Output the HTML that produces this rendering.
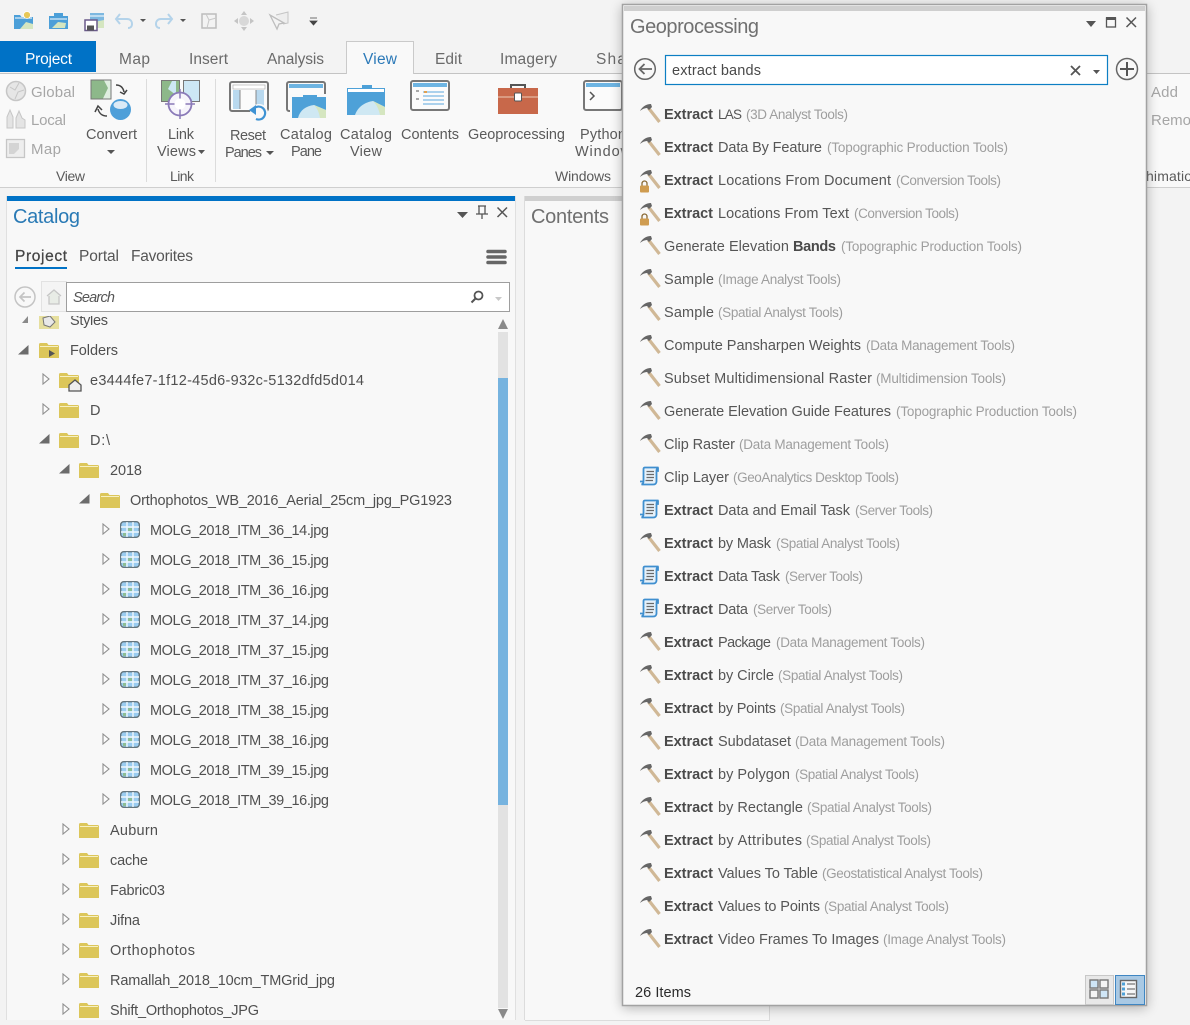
<!DOCTYPE html>
<html><head><meta charset="utf-8"><title>Geoprocessing</title>
<style>
html,body{margin:0;padding:0;background:#f3f3f3;width:1190px;height:1025px;overflow:hidden}
svg{display:block}
text{font-family:"Liberation Sans",sans-serif;font-size:15px;fill:#505050}
.r{fill:#5a5a5a;font-size:14.5px}
.g{fill:#a6a6a6;font-size:15px}
.t{fill:#505050;font-size:14.5px}
.b{font-weight:bold;fill:#4a4a4a;font-size:14.5px}
.m{fill:#565656;font-size:14.5px}
.c{fill:#9e9e9e;font-size:13.5px}
.tab{fill:#6a6a6a;font-size:15.5px}
.h{font-size:20px;fill:#707070}
</style></head><body>
<svg width="1190" height="1025" viewBox="0 0 1190 1025" xmlns="http://www.w3.org/2000/svg">
<defs>
<filter id="sh" x="-10%" y="-10%" width="120%" height="120%"><feGaussianBlur stdDeviation="6"/></filter>
<clipPath id="tree"><rect x="8" y="316" width="488" height="704"/></clipPath>
<clipPath id="rib"><rect x="0" y="0" width="622" height="190"/></clipPath>
<symbol id="ham" viewBox="0 0 22 20" width="22" height="20" overflow="visible">
<path d="M8.500 5 L19.500 19" stroke="#d0b896" stroke-width="3.200" fill="none"/>
<path d="M0 8 C2 4 6 1 11 1 L12 4 L9 7 L7 5 C5 5 2 6 0 8Z" fill="#666"/>
</symbol>
<symbol id="lock" viewBox="0 0 11 13" width="11" height="13">
<path d="M3 6V3.500a2.500 2.500 0 0 1 5 0V6" stroke="#8a6a35" stroke-width="1.300" fill="none"/>
<rect x="1" y="5.500" width="9" height="7" rx="1" fill="#cf9c50"/>
</symbol>
<symbol id="scr" viewBox="0 0 22 20" width="22" height="20">
<path d="M6 1.500H19.500C18 2 17.500 3 17.500 5V15.500C17.500 17.500 16 18.500 14 18.500H2.500C4 18 4.500 17 4.500 15V3C4.500 2 5 1.500 6 1.500Z" fill="#e6f1fa" stroke="#3f8fcf" stroke-width="1.800"/>
<path d="M7.500 5.500H15M7.500 8.500H15M7.500 11.500H15M6.500 14.500H14" stroke="#6a6a6a" stroke-width="1.300"/>
<path d="M1 15.500H4.500M19 1.500V5H17.500" stroke="#3f8fcf" stroke-width="1.800" fill="none"/>
</symbol>
<symbol id="fol" viewBox="0 0 20 16" width="20" height="16">
<path d="M0 2.500C0 1.500.5 1 1.500 1H8L9.500 3H18.500C19.500 3 20 3.500 20 4.500V16H0Z" fill="#dcc65a"/>
<path d="M1 4H19V5H1Z" fill="#f7f0c2"/>
</symbol>
<symbol id="ras" viewBox="0 0 20 17" width="20" height="17">
<rect x=".7" y=".7" width="18.600" height="15.600" rx="3" fill="#9accf0" stroke="#64757c" stroke-width="1.400"/>
<path d="M7 1V16M13 1V16M1 6H19M1 11H19" stroke="#eef7fc" stroke-width="1.400"/>
<rect x="8" y="7" width="4" height="3" fill="#8cbd94"/><rect x="3" y="12" width="3" height="3" fill="#8cbd94"/>
</symbol>
<symbol id="ao" viewBox="0 0 8 12" width="8" height="12"><path d="M1 1L7 6L1 11Z" fill="#fbfbfb" stroke="#8f8f8f" stroke-width="1.100"/></symbol>
<symbol id="af" viewBox="0 0 11 10" width="11" height="10"><path d="M10.500 0V9.500H0Z" fill="#6c6c6c"/></symbol>
</defs>

<!-- base -->
<rect width="1190" height="1025" fill="#f3f3f3"/>
<rect x="0" y="74" width="1190" height="113" fill="#f9f9f9"/>
<rect x="0" y="73" width="1190" height="1" fill="#c4c4c4"/>
<rect x="0" y="187" width="1190" height="1" fill="#cfcfcf"/>

<g clip-path="url(#rib)">
<!-- quick access -->
<path d="M14 15H20L21.500 17H33V29H14Z" fill="#4c9fd8"/><path d="M15 18H32" stroke="#fff"/><path d="M20 29L26 22L33 24V29Z" fill="#d5e6c0"/><circle cx="27" cy="15" r="3.500" fill="#e8c858" stroke="#fff" stroke-width=".7"/>
<path d="M49 16H54V13H63V16H68V29H49Z" fill="#4c9fd8"/><path d="M52 28L58 22L66 23L65 28Z" fill="#d5e6c0"/><path d="M50 19H67" stroke="#fff" stroke-width="1"/>
<path d="M90 13H104V28H90Z" fill="#7db8e0"/><path d="M90 16H104" stroke="#fff"/><path d="M94 22L104 20V28H94Z" fill="#d5e6c0"/><rect x="85" y="20" width="12" height="10.500" fill="#fff" stroke="#6a5a8a" stroke-width="1.500"/><rect x="87" y="25.500" width="7" height="5" fill="#555"/>
<path d="M120 14L116 19L120 24M117 19H127C131 19 132 22 132 24C132 27 130 28 128 28" fill="none" stroke="#b4d3ea" stroke-width="2"/>
<path d="M140 19H146L143 22Z" fill="#555"/>
<path d="M168 14L172 19L168 24M171 19H161C157 19 156 22 156 24C156 27 158 28 160 28" fill="none" stroke="#b4d3ea" stroke-width="2"/>
<path d="M180 19H186L183 22Z" fill="#555"/>
<rect x="202" y="14" width="14" height="14" fill="#f3f3f3" stroke="#bdbdbd" stroke-width="1.500"/><path d="M206 14L209 20L207 28M209 20L216 18" fill="none" stroke="#c8c8c8"/>
<circle cx="244" cy="21" r="5" fill="#d8d8d8"/><path d="M244 11L241 15H247ZM244 31L241 27H247ZM234 21L238 18V24ZM254 21L250 18V24Z" fill="#c4c4c4"/>
<path d="M276 15L288 12V23L283 24" fill="#eee" stroke="#c4c4c4"/><path d="M270 15L277 29L279 24L284 23Z" fill="#f3f3f3" stroke="#bdbdbd" stroke-width="1.300"/>
<path d="M310 18H317M310 21H317L313.500 25Z" fill="#444" stroke="#444" stroke-width=".8"/>

<!-- tabs -->
<rect x="0" y="41" width="96" height="31" fill="#0072c6"/>
<text x="25" y="64" style="fill:#fff;font-size:15.5px" textLength="47">Project</text>
<text class="tab" x="119" y="64" textLength="31">Map</text>
<text class="tab" x="189" y="64" textLength="39">Insert</text>
<text class="tab" x="267" y="64" textLength="57">Analysis</text>
<path d="M346.500 74V41.500H413.500V74" fill="#f9f9f9" stroke="#cacaca"/>
<text x="363" y="64" style="fill:#2b79b8;font-size:15.5px" textLength="34">View</text>
<text class="tab" x="435" y="64" textLength="27">Edit</text>
<text class="tab" x="500" y="64" textLength="57">Imagery</text>
<text class="tab" x="596" y="64" textLength="30">Sha</text>

<!-- ribbon left -->
<circle cx="16" cy="91" r="9.500" fill="#e6e6e6" stroke="#c6c6c6" stroke-width="1.500"/><path d="M10 87L15 90L19 83M15 99L18 92L24 90" stroke="#c6c6c6" fill="none"/>
<text class="g" x="31" y="97" textLength="44">Global</text>
<path d="M7 128V117L10 110L13 117V128ZM16 128V118L19 111L22 118L25 120V128Z" fill="#e4e4e4" stroke="#c6c6c6"/>
<text class="g" x="31" y="125" textLength="35">Local</text>
<rect x="6.500" y="139.500" width="18" height="18" fill="#eee" stroke="#c6c6c6" stroke-width="1.300"/><path d="M9 143H19V149L14 154H9Z" fill="#d4d4d4"/>
<text class="g" x="31" y="154" textLength="30">Map</text>

<rect x="91" y="80" width="20" height="19" fill="#8db88a" stroke="#777"/><path d="M104 80.500L108 88L103 98.500H110.500V80.500Z" fill="#dfeee0"/>
<path d="M116 85C120 85 123 87 124 92M120 92L124 94L127 90" fill="none" stroke="#444" stroke-width="1.500"/>
<path d="M107 116C102 116 99 113 98 109M95 112L98 106L102 110" fill="none" stroke="#444" stroke-width="1.500"/>
<ellipse cx="120.500" cy="109.500" rx="10.500" ry="10.500" fill="#4e9fd9"/><ellipse cx="120.500" cy="105" rx="7" ry="4" fill="#dbeaf6"/>
<text class="r" x="86" y="139" textLength="51">Convert</text>
<path d="M107 150H115L111 154Z" fill="#555"/>
<text class="r" x="56" y="181" style="font-size:14px" textLength="29">View</text>
<rect x="146" y="79" width="1" height="103" fill="#dcdcdc"/>

<rect x="161.500" y="80.500" width="18" height="21" fill="#8db88a" stroke="#777"/><rect x="183.500" y="80.500" width="16" height="21" fill="#cde7f5" stroke="#777"/><path d="M172 81L168 89L176 95V81Z" fill="#cde7f5"/>
<circle cx="180" cy="104" r="11.500" fill="#f6f4fb" stroke="#8a7ab8" stroke-width="1.800"/><path d="M180 89V119M165 104H195" stroke="#8a7ab8" stroke-width="1.500"/><circle cx="180" cy="104" r="5.500" fill="#fff"/>
<text class="r" x="168" y="139" textLength="26">Link</text>
<text class="r" x="157" y="156" textLength="39">Views</text>
<path d="M198 150H205L201.500 154Z" fill="#555"/>
<text class="r" x="170" y="181" style="font-size:14px" textLength="24">Link</text>
<rect x="215" y="79" width="1" height="103" fill="#dcdcdc"/>

<rect x="230" y="82" width="38" height="29" rx="2" fill="#fbfbfb" stroke="#777" stroke-width="2"/><rect x="233" y="85" width="32" height="4" fill="#fff" stroke="#aaa" stroke-width=".6"/><rect x="233" y="90" width="7" height="19" fill="#b9d9ef"/><rect x="256" y="90" width="8" height="19" fill="#b9d9ef"/><path d="M240 90V109M256 90V109" stroke="#888"/>
<circle cx="259" cy="113" r="9" fill="#f9f9f9"/><path d="M254 108.500A6.500 6.500 0 1 1 256 119" fill="none" stroke="#3f93d4" stroke-width="2.200"/><path d="M249 110L256 105V115Z" fill="#3f93d4"/>
<text class="r" x="230" y="140" textLength="36">Reset</text>
<text class="r" x="225" y="157" textLength="37">Panes</text>
<path d="M266 151H274L270 155Z" fill="#555"/>

<rect x="287" y="82" width="38" height="29" rx="2" fill="#fafafa" stroke="#777" stroke-width="2"/><rect x="289" y="84" width="34" height="4" fill="#6db4e2"/>
<rect x="290" y="94" width="38" height="26" fill="#f9f9f9"/>
<path d="M292 97H303V95H317V97H326V118H292Z" fill="#4ea1d8"/><path d="M298 118C300 110 306 106 314 105L326 110V118Z" fill="#cfe8f3"/><path d="M314 105L326 110V118H320C319 112 317 108 314 105Z" fill="#d5e6c0"/>
<text class="r" x="280" y="139" textLength="52">Catalog</text>
<text class="r" x="291" y="156" textLength="31">Pane</text>

<path d="M347 88H362V85H372V88H385V115H347Z" fill="#4ea1d8"/><rect x="348" y="89" width="36" height="3" fill="#fff"/>
<path d="M355 115C358 106 366 102 373 101L385 107V115Z" fill="#cfe8f3"/><path d="M373 101L385 107V115H380C379 109 376 104 373 101Z" fill="#d5e6c0"/>
<text class="r" x="340" y="139" textLength="52">Catalog</text>
<text class="r" x="350" y="156" textLength="32">View</text>

<rect x="411" y="81" width="38" height="29" rx="2" fill="#fbfbfb" stroke="#777" stroke-width="2"/><rect x="413" y="83" width="34" height="4" fill="#6db4e2"/>
<path d="M416 91H419M416 99H419" stroke="#555"/><path d="M423 92H444M423 96H444M423 100H444M423 104H444" stroke="#7bb8e2" stroke-width="1.300"/><rect x="424" y="91" width="3" height="2" fill="#e0a050"/>
<text class="r" x="401" y="139" textLength="58">Contents</text>

<path d="M511 88V85H525V88" fill="none" stroke="#555" stroke-width="2"/><rect x="498" y="88" width="40" height="26" fill="#c8684a"/><path d="M498 97H538" stroke="#eccdb8"/>
<rect x="514.500" y="93" width="7" height="8" rx="1" fill="#fff" stroke="#555"/>
<text class="r" x="468" y="139" textLength="97">Geoprocessing</text>

<rect x="584" y="81" width="38" height="29" rx="2" fill="#fbfbfb" stroke="#777" stroke-width="2"/><rect x="586" y="83" width="34" height="4" fill="#6db4e2"/><path d="M590 92L594 96L590 100" fill="none" stroke="#555" stroke-width="1.500"/>
<text class="r" x="580" y="139" textLength="46">Python</text>
<text class="r" x="575" y="156" textLength="56">Window</text>
<text class="r" x="555" y="181" style="font-size:14px" textLength="56">Windows</text>
</g>

<text class="g" x="1151" y="97" textLength="27">Add</text>
<text class="g" x="1151" y="125" textLength="40">Remo</text>
<text class="r" x="1146" y="181" style="font-size:14px" textLength="46">himatio</text>

<!-- Catalog pane -->
<rect x="7" y="196" width="508" height="824" fill="#f8f8f8"/>
<rect x="6" y="196" width="1" height="824" fill="#e0e0e0"/><rect x="515" y="196" width="1" height="824" fill="#e0e0e0"/>
<rect x="7" y="196" width="508" height="5" fill="#0072c6"/>
<text x="13" y="223" style="font-size:20px;fill:#2a7ab5" textLength="67">Catalog</text>
<path d="M457 212H468L462.500 218Z" fill="#555"/>
<path d="M478 206H486M479 206V214H485V206M476 214H488M482 214V219" fill="none" stroke="#555" stroke-width="1.300"/>
<path d="M497.500 207.500L507 217M507 207.500L497.500 217" stroke="#555" stroke-width="1.500"/>
<text x="15" y="261" style="font-size:15.5px;fill:#444;stroke:#444;stroke-width:.25" textLength="52">Project</text>
<rect x="15" y="267" width="52" height="2" fill="#0072c6"/>
<text x="79" y="261" style="font-size:15.5px;fill:#555" textLength="40">Portal</text>
<text x="131" y="261" style="font-size:15.5px;fill:#555" textLength="62">Favorites</text>
<path d="M488 251.500H505M488 257H505M488 262.500H505" stroke="#666" stroke-width="3.500" stroke-linecap="round"/>

<circle cx="25" cy="297" r="10" fill="#f8f8f8" stroke="#c4c4c4" stroke-width="1.500"/><path d="M31 297H20M24.500 292.500L20 297L24.500 301.500" fill="none" stroke="#c4c4c4" stroke-width="1.700"/>
<rect x="41.500" y="281.500" width="25" height="30" fill="#f4f4f4" stroke="#e2e2e2"/>
<path d="M47 296L54 290L61 296M49 296V304H59V296" fill="#e8ece6" stroke="#c6c6c6" stroke-width="1.300"/>
<rect x="66.500" y="282.500" width="443" height="29" fill="#fff" stroke="#9e9e9e"/>
<text x="73" y="302" style="font-size:14.5px;font-style:italic;fill:#555" textLength="42">Search</text>
<circle cx="478.500" cy="295.500" r="4" fill="none" stroke="#555" stroke-width="1.800"/><path d="M475.500 298.500L471.500 302.500" stroke="#555" stroke-width="2"/>
<path d="M495 297H502L498.500 301Z" fill="#c8c8c8"/>

<!-- scrollbar -->
<rect x="498" y="332" width="10" height="676" fill="#e2e2e2"/>
<rect x="498" y="378" width="10" height="427" fill="#76b3df"/>
<path d="M503 319L498 329H508Z" fill="#8a8a8a"/><path d="M498 1009H508L503 1019Z" fill="#8a8a8a"/>

<!-- tree -->
<g clip-path="url(#tree)">
<path d="M28 316L28 323L22 323Z" fill="#8a8a8a"/>
<rect x="39" y="315" width="20" height="14" fill="#e6df9e"/><path d="M43 318L50 316L55 322L50 327L44 325Z" fill="#e8e8e8" stroke="#777"/>
<text class="t" x="70" y="325" textLength="38">Styles</text>
<use href="#af" x="18" y="345"/><use href="#fol" x="39" y="342"/><path d="M49 350L55 353.500L49 357Z" fill="#555"/>
<text class="t" x="70" y="355" textLength="48">Folders</text>
<use href="#ao" x="42" y="373"/><use href="#fol" x="59" y="372"/>
<path d="M69 385L75 380L81 385V391H69Z" fill="#eee" stroke="#555" stroke-width="1.300"/>
<text class="t" x="90" y="385" textLength="274">e3444fe7-1f12-45d6-932c-5132dfd5d014</text>
<use href="#ao" x="42" y="403"/><use href="#fol" x="59" y="402"/><text class="t" x="90" y="415" textLength="11">D</text>
<use href="#af" x="39" y="434"/><use href="#fol" x="59" y="432"/><text class="t" x="90" y="445" textLength="20">D:\</text>
<use href="#af" x="59" y="464"/><use href="#fol" x="79" y="462"/><text class="t" x="110" y="475" textLength="32">2018</text>
<use href="#af" x="79" y="494"/><use href="#fol" x="100" y="492"/><text class="t" x="130" y="505" textLength="322">Orthophotos_WB_2016_Aerial_25cm_jpg_PG1923</text>

<use href="#ao" x="102" y="523"/><use href="#ras" x="120" y="521"/><text class="t" x="150" y="535" textLength="179">MOLG_2018_ITM_36_14.jpg</text>
<use href="#ao" x="102" y="553"/><use href="#ras" x="120" y="551"/><text class="t" x="150" y="565" textLength="179">MOLG_2018_ITM_36_15.jpg</text>
<use href="#ao" x="102" y="583"/><use href="#ras" x="120" y="581"/><text class="t" x="150" y="595" textLength="179">MOLG_2018_ITM_36_16.jpg</text>
<use href="#ao" x="102" y="613"/><use href="#ras" x="120" y="611"/><text class="t" x="150" y="625" textLength="179">MOLG_2018_ITM_37_14.jpg</text>
<use href="#ao" x="102" y="643"/><use href="#ras" x="120" y="641"/><text class="t" x="150" y="655" textLength="179">MOLG_2018_ITM_37_15.jpg</text>
<use href="#ao" x="102" y="673"/><use href="#ras" x="120" y="671"/><text class="t" x="150" y="685" textLength="179">MOLG_2018_ITM_37_16.jpg</text>
<use href="#ao" x="102" y="703"/><use href="#ras" x="120" y="701"/><text class="t" x="150" y="715" textLength="179">MOLG_2018_ITM_38_15.jpg</text>
<use href="#ao" x="102" y="733"/><use href="#ras" x="120" y="731"/><text class="t" x="150" y="745" textLength="179">MOLG_2018_ITM_38_16.jpg</text>
<use href="#ao" x="102" y="763"/><use href="#ras" x="120" y="761"/><text class="t" x="150" y="775" textLength="179">MOLG_2018_ITM_39_15.jpg</text>
<use href="#ao" x="102" y="793"/><use href="#ras" x="120" y="791"/><text class="t" x="150" y="805" textLength="179">MOLG_2018_ITM_39_16.jpg</text>

<use href="#ao" x="62" y="823"/><use href="#fol" x="79" y="822"/><text class="t" x="110" y="835" textLength="48">Auburn</text>
<use href="#ao" x="62" y="853"/><use href="#fol" x="79" y="852"/><text class="t" x="110" y="865" textLength="38">cache</text>
<use href="#ao" x="62" y="883"/><use href="#fol" x="79" y="882"/><text class="t" x="110" y="895" textLength="55">Fabric03</text>
<use href="#ao" x="62" y="913"/><use href="#fol" x="79" y="912"/><text class="t" x="110" y="925" textLength="30">Jifna</text>
<use href="#ao" x="62" y="943"/><use href="#fol" x="79" y="942"/><text class="t" x="110" y="955" textLength="85">Orthophotos</text>
<use href="#ao" x="62" y="973"/><use href="#fol" x="79" y="972"/><text class="t" x="110" y="985" textLength="225">Ramallah_2018_10cm_TMGrid_jpg</text>
<use href="#ao" x="62" y="1003"/><use href="#fol" x="79" y="1002"/><text class="t" x="110" y="1015" textLength="149">Shift_Orthophotos_JPG</text>
</g>

<!-- Contents pane -->
<rect x="525" y="196" width="245" height="824" fill="#f8f8f8"/>
<rect x="524" y="196" width="1" height="824" fill="#dcdcdc"/><rect x="769" y="196" width="1" height="824" fill="#dcdcdc"/>
<rect x="525" y="1020" width="245" height="1" fill="#dcdcdc"/>
<rect x="525" y="196" width="245" height="5" fill="#cfcfcf"/>
<text class="h" x="531" y="223" textLength="78">Contents</text>

<!-- Floating Geoprocessing -->
<rect x="622" y="6" width="525" height="1002" fill="#000" opacity=".28" filter="url(#sh)"/>
<rect x="622.500" y="4.500" width="524" height="1001" fill="#f8f8f8" stroke="#a2a2a2" stroke-width="1.500"/>
<rect x="624" y="6" width="521" height="5" fill="#cfcfcf"/>
<text class="h" x="630" y="33" textLength="129">Geoprocessing</text>
<path d="M1086 21H1096L1091 27Z" fill="#555"/>
<rect x="1106.500" y="18" width="9" height="9" fill="none" stroke="#555" stroke-width="1.300"/><rect x="1106" y="17" width="10" height="3" fill="#555"/>
<path d="M1126.500 17.500L1136 27M1136 17.500L1126.500 27" stroke="#555" stroke-width="1.500"/>
<circle cx="645" cy="69" r="10.300" fill="#f8f8f8" stroke="#666" stroke-width="1.500"/><path d="M652 69H640M644.500 64L639.500 69L644.500 74" fill="none" stroke="#666" stroke-width="1.800"/>
<rect x="665.500" y="55.500" width="442" height="29" fill="#fff" stroke="#0d7fc4" stroke-width="1.200"/>
<text x="672" y="75" style="font-size:14.5px;fill:#4a4a4a" textLength="89">extract bands</text>
<path d="M1071 66L1080 75M1080 66L1071 75" stroke="#555" stroke-width="1.800"/>
<path d="M1093 70H1100L1096.500 74Z" fill="#555"/>
<circle cx="1127" cy="69" r="10.500" fill="#f8f8f8" stroke="#666" stroke-width="1.500"/><path d="M1127 62V76M1120 69H1134" stroke="#555" stroke-width="2"/>

<!-- list -->
<use href="#ham" x="640" y="103"/><text class="b" x="664" y="119" textLength="49">Extract</text><text class="m" x="718" y="119" style="font-size:13.5px" textLength="24">LAS</text><text class="c" x="746" y="119" textLength="102">(3D Analyst Tools)</text>
<use href="#ham" x="640" y="136"/><text class="b" x="664" y="152" textLength="49">Extract</text><text class="m" x="718" y="152" textLength="104">Data By Feature</text><text class="c" x="827" y="152" textLength="181">(Topographic Production Tools)</text>
<use href="#ham" x="640" y="169"/><use href="#lock" x="639" y="180"/><text class="b" x="664" y="185" textLength="49">Extract</text><text class="m" x="718" y="185" textLength="173">Locations From Document</text><text class="c" x="896" y="185" textLength="105">(Conversion Tools)</text>
<use href="#ham" x="640" y="202"/><use href="#lock" x="639" y="213"/><text class="b" x="664" y="218" textLength="49">Extract</text><text class="m" x="718" y="218" textLength="131">Locations From Text</text><text class="c" x="854" y="218" textLength="105">(Conversion Tools)</text>
<use href="#ham" x="640" y="235"/><text class="m" x="664" y="251" textLength="125">Generate Elevation</text><text class="b" x="793" y="251" textLength="43">Bands</text><text class="c" x="841" y="251" textLength="181">(Topographic Production Tools)</text>
<use href="#ham" x="640" y="268"/><text class="m" x="664" y="284" textLength="50">Sample</text><text class="c" x="718" y="284" textLength="123">(Image Analyst Tools)</text>
<use href="#ham" x="640" y="301"/><text class="m" x="664" y="317" textLength="50">Sample</text><text class="c" x="718" y="317" textLength="125">(Spatial Analyst Tools)</text>
<use href="#ham" x="640" y="334"/><text class="m" x="664" y="350" textLength="197">Compute Pansharpen Weights</text><text class="c" x="866" y="350" textLength="149">(Data Management Tools)</text>
<use href="#ham" x="640" y="367"/><text class="m" x="664" y="383" textLength="208">Subset Multidimensional Raster</text><text class="c" x="876" y="383" textLength="130">(Multidimension Tools)</text>
<use href="#ham" x="640" y="400"/><text class="m" x="664" y="416" textLength="227">Generate Elevation Guide Features</text><text class="c" x="896" y="416" textLength="181">(Topographic Production Tools)</text>
<use href="#ham" x="640" y="433"/><text class="m" x="664" y="449" textLength="71">Clip Raster</text><text class="c" x="739" y="449" textLength="150">(Data Management Tools)</text>
<use href="#scr" x="639" y="466"/><text class="m" x="664" y="482" textLength="65">Clip Layer</text><text class="c" x="733" y="482" textLength="166">(GeoAnalytics Desktop Tools)</text>
<use href="#scr" x="639" y="499"/><text class="b" x="664" y="515" textLength="49">Extract</text><text class="m" x="718" y="515" textLength="132">Data and Email Task</text><text class="c" x="855" y="515" textLength="78">(Server Tools)</text>
<use href="#ham" x="640" y="532"/><text class="b" x="664" y="548" textLength="49">Extract</text><text class="m" x="718" y="548" textLength="53">by Mask</text><text class="c" x="776" y="548" textLength="124">(Spatial Analyst Tools)</text>
<use href="#scr" x="639" y="565"/><text class="b" x="664" y="581" textLength="49">Extract</text><text class="m" x="718" y="581" textLength="62">Data Task</text><text class="c" x="785" y="581" textLength="78">(Server Tools)</text>
<use href="#scr" x="639" y="598"/><text class="b" x="664" y="614" textLength="49">Extract</text><text class="m" x="718" y="614" textLength="30">Data</text><text class="c" x="753" y="614" textLength="79">(Server Tools)</text>
<use href="#ham" x="640" y="631"/><text class="b" x="664" y="647" textLength="49">Extract</text><text class="m" x="718" y="647" textLength="53">Package</text><text class="c" x="776" y="647" textLength="149">(Data Management Tools)</text>
<use href="#ham" x="640" y="664"/><text class="b" x="664" y="680" textLength="49">Extract</text><text class="m" x="718" y="680" textLength="56">by Circle</text><text class="c" x="778" y="680" textLength="125">(Spatial Analyst Tools)</text>
<use href="#ham" x="640" y="697"/><text class="b" x="664" y="713" textLength="49">Extract</text><text class="m" x="718" y="713" textLength="58">by Points</text><text class="c" x="780" y="713" textLength="125">(Spatial Analyst Tools)</text>
<use href="#ham" x="640" y="730"/><text class="b" x="664" y="746" textLength="49">Extract</text><text class="m" x="718" y="746" textLength="73">Subdataset</text><text class="c" x="795" y="746" textLength="150">(Data Management Tools)</text>
<use href="#ham" x="640" y="763"/><text class="b" x="664" y="779" textLength="49">Extract</text><text class="m" x="718" y="779" textLength="72">by Polygon</text><text class="c" x="795" y="779" textLength="124">(Spatial Analyst Tools)</text>
<use href="#ham" x="640" y="796"/><text class="b" x="664" y="812" textLength="49">Extract</text><text class="m" x="718" y="812" textLength="85">by Rectangle</text><text class="c" x="807" y="812" textLength="125">(Spatial Analyst Tools)</text>
<use href="#ham" x="640" y="829"/><text class="b" x="664" y="845" textLength="49">Extract</text><text class="m" x="718" y="845" textLength="84">by Attributes</text><text class="c" x="806" y="845" textLength="125">(Spatial Analyst Tools)</text>
<use href="#ham" x="640" y="862"/><text class="b" x="664" y="878" textLength="49">Extract</text><text class="m" x="718" y="878" textLength="100">Values To Table</text><text class="c" x="822" y="878" textLength="161">(Geostatistical Analyst Tools)</text>
<use href="#ham" x="640" y="895"/><text class="b" x="664" y="911" textLength="49">Extract</text><text class="m" x="718" y="911" textLength="102">Values to Points</text><text class="c" x="824" y="911" textLength="125">(Spatial Analyst Tools)</text>
<use href="#ham" x="640" y="928"/><text class="b" x="664" y="944" textLength="49">Extract</text><text class="m" x="718" y="944" textLength="161">Video Frames To Images</text><text class="c" x="883" y="944" textLength="123">(Image Analyst Tools)</text>

<text x="635" y="997" style="font-size:14.5px;fill:#2a2a2a" textLength="56">26 Items</text>

<!-- view buttons -->
<rect x="1085.500" y="975.500" width="28" height="29" fill="#e8e8e8" stroke="#c8c8c8"/>
<rect x="1090" y="980" width="8" height="8" fill="#cfe6f7" stroke="#777" stroke-width="1.400"/><rect x="1100" y="980" width="8" height="8" fill="#f4f4f4" stroke="#777" stroke-width="1.400"/>
<rect x="1090" y="990" width="8" height="8" fill="#f4f4f4" stroke="#777" stroke-width="1.400"/><rect x="1100" y="990" width="8" height="8" fill="#cfe6f7" stroke="#777" stroke-width="1.400"/>
<rect x="1115.500" y="975.500" width="29" height="29" fill="#a9c9e4" stroke="#3f86c2"/>
<rect x="1120.500" y="980.500" width="16" height="17" fill="#f6f6f6" stroke="#666" stroke-width="1.400"/>
<path d="M1122 982.500H1125V985.500H1122ZM1122 987.500H1125V990.500H1122ZM1122 992.500H1125V995.500H1122Z" fill="#4ea1d8"/>
<path d="M1127 984H1135M1127 989H1135M1127 994H1135" stroke="#777" stroke-width="1.300"/>
</svg>
</body></html>
